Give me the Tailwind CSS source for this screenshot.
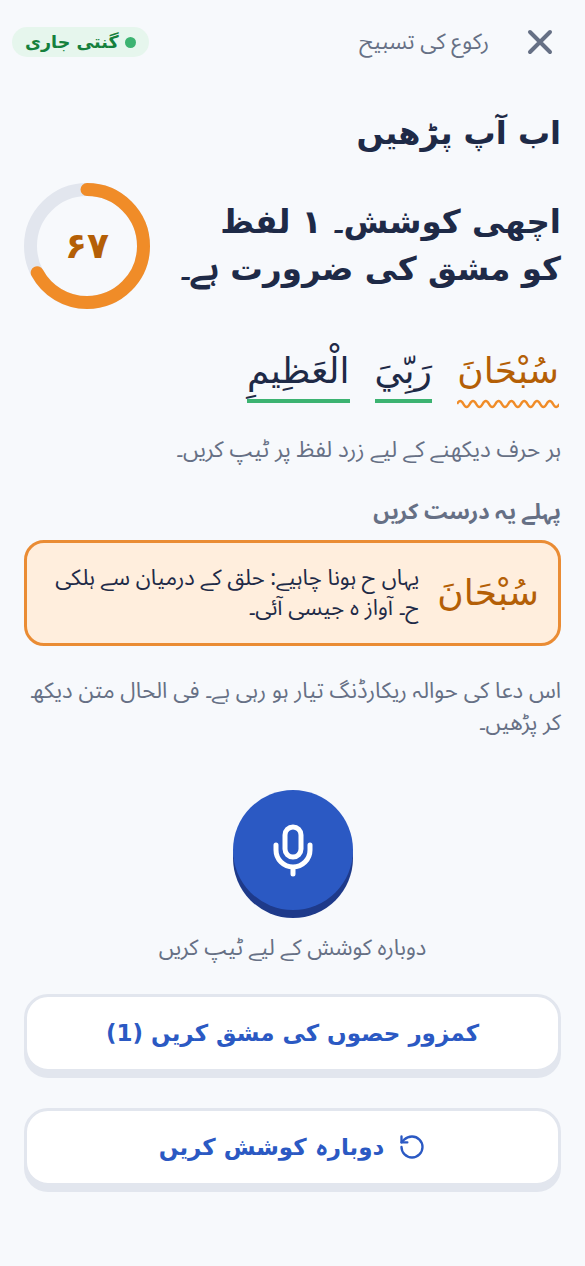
<!DOCTYPE html>
<html lang="ur" dir="rtl">
<head>
    <meta charset="UTF-8">
    <meta name="viewport" content="width=device-width, initial-scale=1.0">
    <title>Tasbeeh</title>
    <script src="https://cdn.jsdelivr.net/npm/@tailwindcss/browser@4"></script>
</head>
<body class="bg-[#f7f9fc] font-['Noto_Sans_Arabic','DejaVu_Sans',sans-serif] w-[585px] h-[1266px] overflow-hidden">
    <div class="flex items-center h-[84px] pr-[32px] pl-[12px]">
        <svg class="w-[26px] h-[26px] shrink-0" viewBox="0 0 26 26" fill="none" stroke="#667085" stroke-width="4" stroke-linecap="round"><path d="M3 3l20 20M23 3L3 23"/></svg>
        <span class="mr-[38px] text-[22px] text-[#667085]">رکوع کی تسبیح</span>
        <div class="mr-auto flex items-center gap-[6px] h-[30px] px-[13px] rounded-full bg-[#e6f6ed] text-[#15803d] text-[17.5px] font-bold font-['DejaVu_Sans']">
            <span class="w-[11px] h-[11px] rounded-full bg-[#3cb371]"></span>
            <span>گنتی جاری</span>
        </div>
    </div>
    <main class="px-[24px]">
        <h1 class="text-[32px] leading-[44px] font-bold font-['DejaVu_Sans'] text-[#1e2a47] mt-[27px]">اب آپ پڑھیں</h1>
        <div class="flex items-center justify-between mt-[28px]">
            <p class="text-[32.5px] leading-[46px] font-bold font-['DejaVu_Sans'] text-[#1e2a47] whitespace-nowrap">اچھی کوشش<span class="font-['Noto_Sans_Arabic']">۔</span> ۱ لفظ<br>کو مشق کی ضرورت <span class="font-['Noto_Sans_Arabic']">ہے۔</span></p>
            <div class="relative w-[126px] h-[126px] shrink-0">
                <svg class="w-full h-full -rotate-90" viewBox="0 0 126 126" fill="none" stroke-width="13">
                    <circle cx="63" cy="63" r="56.5" stroke="#e2e6ee"/>
                    <circle cx="63" cy="63" r="56.5" stroke="#f08c28" stroke-linecap="round" stroke-dasharray="238 355"/>
                </svg>
                <span class="absolute inset-0 flex items-center justify-center text-[36px] font-bold font-['DejaVu_Sans'] text-[#b45f06]">۶۷</span>
            </div>
        </div>
        <div class="flex items-start gap-[25px] pr-[2px] mt-[33px] text-[36px] leading-[57px] font-['DejaVu_Sans'] text-[#1e2a47]">
            <div class="text-[#b45f06]">سُبْحَانَ
                <svg class="w-[102px] h-[10px] block" viewBox="0 0 102 10" fill="none" stroke="#f08c28" stroke-width="2.5"><path d="M0 5q3.200 -6 6.400 0t6.400 0t6.400 0t6.400 0t6.400 0t6.400 0t6.400 0t6.400 0t6.400 0t6.400 0t6.400 0t6.400 0t6.400 0t6.400 0t6.400 0t6.400 0"/></svg>
            </div>
            <div class="border-b-[4px] border-[#3cb371]">رَبِّيَ</div>
            <div class="border-b-[4px] border-[#3cb371]">الْعَظِيمِ</div>
        </div>
        <p class="mt-[25px] text-[22.5px] leading-[32px] text-[#667085]">ہر حرف دیکھنے کے لیے زرد لفظ پر ٹیپ کریں۔</p>
        <p class="mt-[31px] text-[22px] font-bold leading-[30px] text-[#667085]">پہلے یہ درست کریں</p>
        <div class="flex items-center gap-[18px] mt-[13px] h-[106px] px-[19px] rounded-[20px] border-[3px] border-[#ea8c34] bg-[#ffeedd]">
            <span class="text-[36px] font-['DejaVu_Sans'] text-[#b45f06] shrink-0">سُبْحَانَ</span>
            <p class="text-[22px] leading-[30px] text-[#1e2a47]">یہاں ح ہونا چاہیے: حلق کے درمیان سے ہلکی ح۔ آواز ہ جیسی آئی۔</p>
        </div>
        <p class="mt-[29px] text-[22.2px] leading-[32px] text-[#667085]">اس دعا کی حوالہ ریکارڈنگ تیار ہو رہی ہے۔ فی الحال متن دیکھ کر پڑھیں۔</p>
        <div class="flex flex-col items-center mt-[51px]">
            <button class="w-[120px] h-[120px] rounded-full bg-[#2b59c3] shadow-[0_8px_0_#1e3a8a] flex items-center justify-center">
                <svg class="w-[46px] h-[54px]" viewBox="0 0 46 54" fill="none" stroke="#fff" stroke-width="5" stroke-linecap="round"><rect x="15" y="4" width="16" height="30" rx="8"/><path d="M6 22v5a17 17 0 0 0 34 0v-5M23 44v7"/></svg>
            </button>
            <span class="mt-[22px] text-[22px] leading-[32px] text-[#667085]">دوبارہ کوشش کے لیے ٹیپ کریں</span>
        </div>
        <div class="flex flex-col gap-[36px] mt-[30px]">
            <button class="h-[78px] rounded-[24px] bg-white border-[3px] border-[#e2e6ee] shadow-[0_6px_0_#e2e6ee] text-[23px] font-bold font-['DejaVu_Sans'] text-[#2b59c3]">کمزور حصوں کی مشق کریں (1)</button>
            <button class="h-[78px] rounded-[24px] bg-white border-[3px] border-[#e2e6ee] shadow-[0_6px_0_#e2e6ee] text-[23px] font-bold font-['DejaVu_Sans'] text-[#2b59c3] flex items-center justify-center gap-[14px]">
                <svg class="w-[28px] h-[28px]" viewBox="0 0 24 24" fill="none" stroke="#2b59c3" stroke-width="2" stroke-linecap="round" stroke-linejoin="round"><path d="M3 12a9 9 0 1 0 9-9 9.75 9.75 0 0 0-6.74 2.74L3 8"/><path d="M3 3v5h5"/></svg>
                <span>دوبارہ کوشش کریں</span>
            </button>
        </div>
    </main>
</body>
</html>
